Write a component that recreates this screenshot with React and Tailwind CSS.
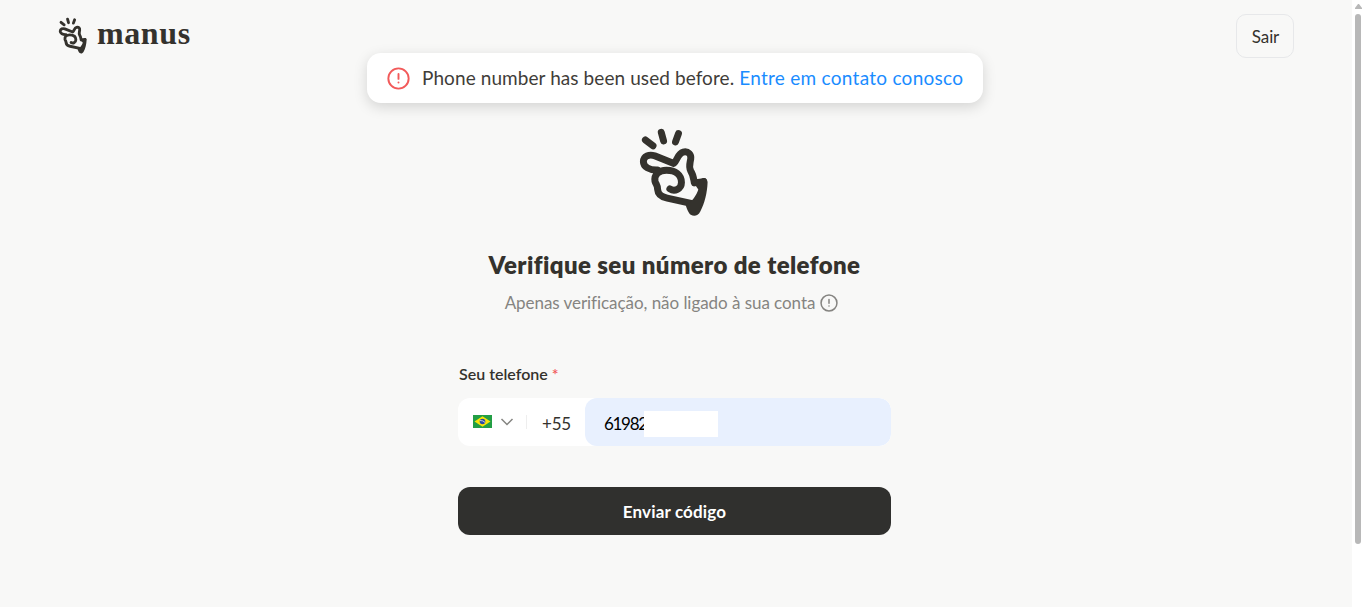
function HandLogo({ className }) {
  return (
    <svg className={className} viewBox="42 26 212 272" fill="none" stroke="#34322d" strokeWidth="21" strokeLinecap="round" strokeLinejoin="round" aria-hidden="true">
      <path d="M60 65L83 83M108 42L115 68M160 46L151 71" />
      <path d="M96 156C72 157 54 146 54 131C54 113 72 108 88 113L146 136C156 128 158 106 174 102C190 98 199 109 197 123C195 136 190 145 197 159C206 172 206 187 208 195L236 191" />
      <path d="M134 213C148 222 169 214 169 194C169 170 150 157 124 157C100 157 86 170 89 190C92 200 97 201 97 215C98 230 111 238 126 241L198 257" />
      <path d="M211 202C222 198 225 181 236 180C244 180 247 185 248 193C247 224 239 258 226 281C219 294 208 297 197 291C189 285 185 270 182 263C202 251 214 233 220 215Z" fill="#34322d" stroke="none" />
    </svg>
  );
}

function AlertCircle({ className }) {
  return (
    <svg className={className} viewBox="0 0 24 24" fill="none" stroke="currentColor" strokeWidth="2" strokeLinecap="round" aria-hidden="true">
      <circle cx="12" cy="12" r="10.6" />
      <path d="M12 7.2v5.2M12 16v.1" />
    </svg>
  );
}

function BrazilFlag() {
  return (
    <svg className="h-[13px] w-[19px]" viewBox="0 0 19 13" aria-hidden="true">
      <path fill="#229e45" d="M0 0h19v13H0z" />
      <path fill="#f8e509" d="M9.5 1.2L17.5 6.5L9.5 11.8L1.5 6.5Z" />
      <circle cx="9.5" cy="6.5" r="2.8" fill="#2b49a3" />
      <path d="M7 5.5Q10 5.3 12 7.4" stroke="#ffffef" strokeWidth=".7" fill="none" />
    </svg>
  );
}

export default function App() {
  return (
    <div className="relative flex h-[607px] w-[1362px] overflow-hidden bg-white font-['Lato','Open_Sans',sans-serif] text-[#34322d]">
      <div className="w-[1352px] bg-[#f8f8f7]">
        <header className="flex h-[72px] items-start justify-between pt-[14px] pr-[58px] pl-[58px]">
          <div className="flex items-center gap-[9px] pt-[3px]">
            <HandLogo className="h-[37px] w-[30px]" />
            <span className="-mt-[5px] font-['Liberation_Serif',serif] text-[32px] leading-9 font-bold tracking-[0.6px]">manus</span>
          </div>
          <button className="h-11 w-[58px] rounded-[10px] border border-[#e7e8ea] pt-[2px] pl-px text-[17px] tracking-[-0.1px]">Sair</button>
        </header>

        <main className="flex w-[1349px] flex-col items-center pt-[55px]">
          <HandLogo className="h-[90px] w-[71px]" />
          <h1 className="mt-8 text-2xl leading-8 font-extrabold tracking-[0.4px] whitespace-nowrap">Verifique seu número de telefone</h1>
          <p className="mt-[10px] flex items-center gap-[5px] pr-[6px] text-[17px] leading-6 whitespace-nowrap text-[#858481]">
            <span className="tracking-[-0.05px]">Apenas verificação, não ligado à sua conta</span>
            <AlertCircle className="size-[18px]" />
          </p>
          <form className="mt-[47px] w-[433px]">
            <label className="block pl-px text-[16px] leading-6 font-semibold">
              Seu telefone <span className="text-[#f25a5a]">*</span>
            </label>
            <div className="mt-3 flex h-12 items-center overflow-hidden rounded-xl bg-white">
              <div className="flex w-[69px] items-center border-r border-[#eeeeee] pb-px pl-[15px]">
                <BrazilFlag />
                <svg className="ml-[8px] h-[8px] w-[14px]" viewBox="0 0 14 8" fill="none" stroke="#858481" strokeWidth="1.5" aria-hidden="true">
                  <path d="M1.5 1L7 6.5L12.5 1" />
                </svg>
              </div>
              <span className="w-[58px] pt-[3px] pl-[15px] text-[17px] tracking-[-0.2px]">+55</span>
              <div className="flex h-full flex-1 items-center rounded-xl bg-[#e8f0fe] pl-[19px] text-[17px] text-black">
                <span className="w-10 pt-[3px] tracking-[-1.3px]">61982</span>
                <span className="relative mt-[3px] h-[26px] w-[74px] bg-white" />
              </div>
            </div>
            <button type="button" className="mt-[41px] h-12 w-full rounded-xl bg-[#30302e] pt-[2px] text-[17px] font-bold tracking-[0.15px] text-white">Enviar código</button>
          </form>
        </main>
      </div>

      <div className="flex w-[10px] flex-col items-center bg-white pt-[4px]">
        <svg className="ml-[2px] h-[5px] w-[7px]" viewBox="0 0 7 5" aria-hidden="true">
          <path fill="#b8b8b8" d="M3 0h1l3 4v1H0V4Z" />
        </svg>
        <div className="mt-[5px] ml-[2px] h-[530px] w-[6px] rounded-full bg-[#b8b8b8]" />
      </div>

      <div className="absolute top-[53px] left-[367px] flex h-[50px] w-[616px] items-center rounded-[14px] bg-white pl-5 text-[19px] whitespace-nowrap text-[#3f3d39] shadow-[0_4px_14px_rgba(0,0,0,0.15)]">
        <AlertCircle className="mr-3 size-[23px] text-[#f25a5a]" />
        <span className="tracking-[0.08px]">Phone number has been used before.</span>
        <a className="ml-[5px] tracking-[0.27px] text-[#1a8cff]">Entre em contato conosco</a>
      </div>
    </div>
  );
}
